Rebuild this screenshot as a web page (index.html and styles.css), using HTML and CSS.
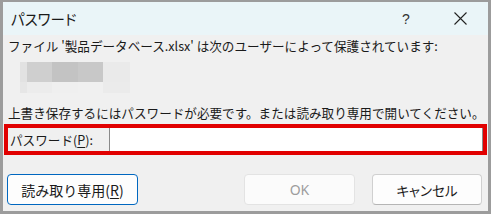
FILE: index.html
```html
<!DOCTYPE html>
<html lang="ja">
<head>
<meta charset="utf-8">
<link rel="stylesheet" href="styles.css">
</head>
<body>
<div class="window">
  <div class="titlebar">
    <span class="title">パスワード</span>
    <span class="help">?</span>
    <span class="close">
      <svg width="13" height="13" viewBox="0 0 13 13"><path d="M0.5 0.5 L12.5 12.5 M12.5 0.5 L0.5 12.5" stroke="#222" stroke-width="1.1" fill="none"/></svg>
    </span>
  </div>
  <div class="content">
    <p class="line1">ファイル '製品データベース.xlsx' は次のユーザーによって保護されています:</p>
    <div class="blur">
      <div class="blur-row">
        <span class="b b1"></span><span class="b b2"></span><span class="b b3"></span><span class="b b4"></span><span class="b b5"></span>
      </div>
      <div class="blur-row thin">
        <span class="b c1"></span><span class="b c2"></span><span class="b c3"></span><span class="b c4"></span><span class="b c5"></span>
      </div>
    </div>
    <p class="line2">上書き保存するにはパスワードが必要です。または読み取り専用で開いてください。</p>
    <div class="pwbox">
      <label class="pwlabel">パスワード(<u>P</u>):</label>
      <div class="pwinput"></div>
    </div>
    <div class="buttons">
      <button class="btn primary">読み取り専用(<u>R</u>)</button>
      <span class="spacer"></span>
      <button class="btn disabled">OK</button>
      <button class="btn">キャンセル</button>
    </div>
  </div>
</div>
</body>
</html>
```
FILE: styles.css
```css
* { box-sizing: border-box; }
html, body { margin: 0; padding: 0; background: #ffffff; }
body {
  font-family: "Noto Sans CJK JP", "Noto Sans", sans-serif;
  width: 493px; height: 214px; overflow: hidden;
}
.window {
  width: 491px; height: 214px;
  border-style: solid;
  border-color: #9c9c9c;
  border-width: 2px 3px 3px 3px;
  background: #f0f0f0;
  display: flex; flex-direction: column;
}
.titlebar {
  height: 33px; flex: none;
  background: #eaf5f8;
  display: flex; align-items: center;
  padding-left: 8px;
  color: #1a1a1a;
}
.title {
  font-size: 14.5px;
  font-feature-settings: "palt";
  flex: 1;
  margin-top: -1px;
}
.help {
  font-size: 14px;
  width: 20px; text-align: center;
  margin-right: 38px;
  font-family: "Liberation Sans", sans-serif;
  color: #333;
}
.close { width: 13px; height: 13px; margin-right: 21px; display: flex; }
.content {
  flex: 1;
  display: flex; flex-direction: column;
  color: #1a1a1a;
  font-size: 12.6px;
}
.line1 { margin: 3px 0 0 5px; line-height: 16px; white-space: nowrap; }
.blur { margin: 8px 0 0 17px; display: flex; flex-direction: column; }
.blur-row { display: flex; height: 20px; }
.blur-row.thin { height: 11px; }
.b { display: block; height: 100%; }
.b1 { width: 7px; background: #e2e2e2; }
.b2 { width: 25px; background: #cfcfcf; }
.b3 { width: 26px; background: #c3c3c3; }
.b4 { width: 25px; background: #c8c8c8; }
.b5 { width: 27px; background: #eaeaea; }
.c1 { width: 7px; background: #e6e6e6; }
.c2 { width: 25px; background: #ececec; }
.c3 { width: 26px; background: #efefef; }
.c4 { width: 25px; background: #f0f0f0; }
.c5 { width: 27px; background: #ebebeb; }
.line2 { margin: 12px 0 0 5px; line-height: 16px; white-space: nowrap; }
.pwbox {
  margin: 3px 0 0 1px;
  width: 483px; height: 31px;
  border: 4px solid #e10000;
  display: flex; align-items: stretch;
}
.pwlabel {
  width: 101px; flex: none;
  padding-left: 2px;
  display: flex; align-items: center;
  line-height: 16px;
}
.pwinput {
  flex: 1;
  background: #ffffff;
  border-left: 1px solid #8a8a8a;
  border-right: 1px solid #8a8a8a;
}
.buttons {
  display: flex; align-items: center;
  margin-top: 19px;
  padding: 0 6px 0 4px;
}
.spacer { flex: 1; }
.btn {
  font-family: inherit;
  font-size: 13.5px;
  height: 31px;
  border: 1px solid #d0d0d0;
  border-bottom-color: #b5b5b5;
  border-radius: 4px;
  background: #fdfdfd;
  color: #1a1a1a;
  padding: 0;
  width: 110px;
  font-feature-settings: "palt";
}
.btn.primary { width: 131px; border: 1px solid #0067c0; font-size: 14px; font-feature-settings: normal; }
.btn.disabled { width: 111px; margin-right: 17px; color: #9d9d9d; border-color: #e3e3e3; background: #fbfbfb; font-family: "Noto Sans", sans-serif; font-size: 14px; }
u { text-decoration-thickness: 1px; text-underline-offset: 2px; }
```
